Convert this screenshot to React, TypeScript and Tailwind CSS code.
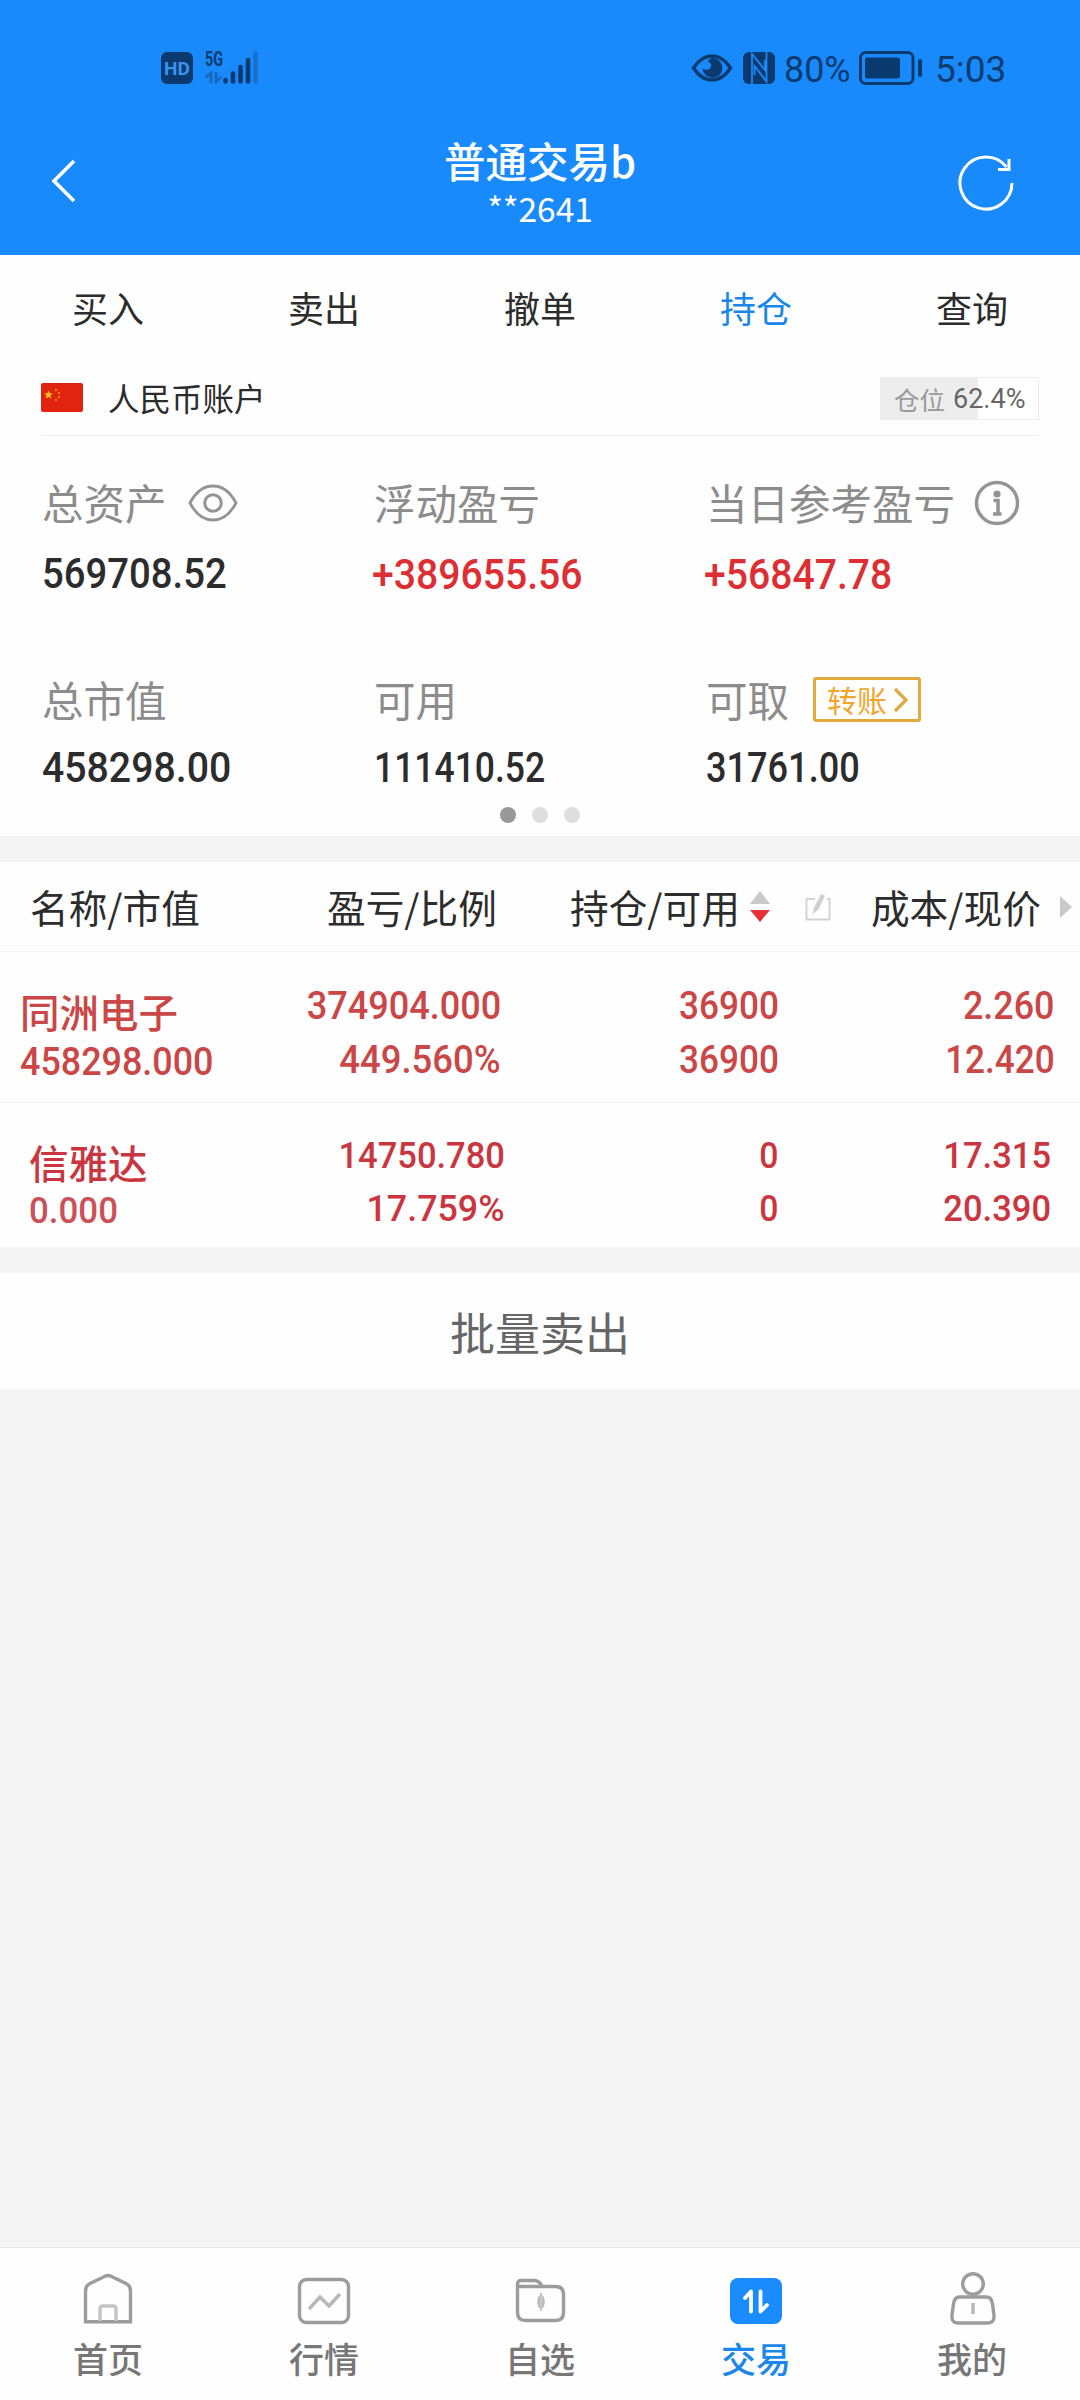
import React from "react";

const CJK = "font-['Noto_Sans_CJK_SC',sans-serif]";
const NUM = "inline-block whitespace-nowrap font-['Roboto',sans-serif] font-medium";

function StatusBar() {
  return (
    <div className="flex h-[136px] items-center pl-[161px] pr-[76px] text-[#0a3a6e]">
      <div className="flex h-8 w-8 items-center justify-center rounded-[6px] bg-[#0a3a6e] font-['Roboto',sans-serif] text-[19px] font-bold leading-none text-[#3b93ee]">
        HD
      </div>
      <div className="ml-[12px] flex h-[36px] w-[18px] flex-col justify-between pb-[2px]">
        <span className="inline-block origin-left scale-x-[0.72] whitespace-nowrap font-['Roboto',sans-serif] text-[20px] font-bold leading-[18px]">5G</span>
        <svg width="18" height="13" viewBox="0 0 18 13">
          <path d="M1 6.500L6 2v10M11 1v10l5-5" fill="none" stroke="#1668b8" strokeWidth="2.800" />
        </svg>
      </div>
      <svg width="36" height="36" viewBox="223 50 36 36">
        <g stroke="#0a3a6e" strokeWidth="4.600" strokeLinecap="round">
          <path d="M225.500 80v1.500M233 73.500v8M240.500 67v14.500M248 60v21.500" />
          <path d="M255.700 53.500v28" stroke="#1871cb" />
        </g>
      </svg>
      <div className="ml-auto flex items-center">
        <svg width="42" height="30" viewBox="0 0 42 30">
          <path d="M2.500 15C8 6.500 14 3 21 3s13 3.500 18.500 12C34 23.500 28 27 21 27S8 23.500 2.500 15z" fill="none" stroke="#0a3a6e" strokeWidth="3.400" />
          <path d="M22 5a10 10 0 1 1-10.500 10.500c3.500 2.500 7.500 1.300 8.500-2 .7-2.800-.5-4-3-4.500.5-2.500 2.500-4 5-4z" fill="#0a3a6e" />
        </svg>
        <svg className="ml-[10px]" width="32" height="32" viewBox="0 0 32 32">
          <rect width="32" height="32" rx="6" fill="#0a3a6e" />
          <path d="M9 32V2l13 16V8M23.500 0v29.500L11.500 14v9" fill="none" stroke="#188afc" strokeWidth="1.800" />
        </svg>
        <span className="ml-[9px] mt-[4px] w-[68px] whitespace-nowrap font-['Roboto',sans-serif] text-[37px] leading-[44px]">
          <span className="inline-block origin-left scale-x-[0.97]">80%</span>
        </span>
        <svg className="ml-[7px]" width="64" height="34" viewBox="0 0 64 34">
          <rect x="1.500" y="1.500" width="52.500" height="31" rx="5.500" fill="none" stroke="#0a3a6e" strokeWidth="3" />
          <rect x="6" y="6.500" width="35" height="21" rx="2" fill="#0a3a6e" />
          <rect x="59" y="8" width="4" height="18" rx="2" fill="#0a3a6e" />
        </svg>
        <span className="ml-[12px] mt-[4px] w-[69px] whitespace-nowrap font-['Roboto',sans-serif] text-[37px] leading-[44px]">5:03</span>
      </div>
    </div>
  );
}

function TitleBar() {
  return (
    <div className="grid h-[119px] grid-cols-[1fr_auto_1fr] items-start pl-[50px] pr-[64px] text-white">
      <svg className="mt-[23px]" width="28" height="44" viewBox="0 0 28 44">
        <path d="M24 2L4 22l20 20" fill="none" stroke="currentColor" strokeWidth="3.600" />
      </svg>
      <div className="ml-[14px] flex flex-col items-center">
        <div className="h-[51px] text-[41.500px] font-medium leading-[49px]">普通交易b</div>
        <div className="text-[33.500px] leading-[42px]">**2641</div>
      </div>
      <svg className="ml-auto mt-[18px]" width="60" height="60" viewBox="956 154 60 60">
        <path d="M1012 183a26 26 0 1 1-5.500-16" fill="none" stroke="currentColor" strokeWidth="3" />
        <path d="M1009 159v10.500h-11" fill="none" stroke="currentColor" strokeWidth="3" />
      </svg>
    </div>
  );
}

const tabs = ["买入", "卖出", "撤单", "持仓", "查询"];

function Tabs() {
  return (
    <div className="grid h-[108px] grid-cols-5 text-center text-[36px] leading-[104px]">
      {tabs.map((t) => (
        <div key={t} className={t === "持仓" ? "text-[#1787e8]" : "text-[#2c2c2c]"}>{t}</div>
      ))}
    </div>
  );
}

function AccountRow() {
  return (
    <div className="mx-[41px] flex h-[73px] items-start border-b border-[#f3eeee]">
      <svg className="mt-[20px]" width="42" height="29" viewBox="0 0 42 29">
        <rect width="42" height="29" rx="2" fill="#e0240f" />
        <path d="M7.500 7.500l1.200 2.800 3 .2-2.300 2 .8 3-2.700-1.600-2.700 1.600.8-3-2.300-2 3-.2z" fill="#fbc21a" />
        <g fill="#f0821c">
          <circle cx="15" cy="7" r="1.200" />
          <circle cx="18" cy="10" r="1.200" />
          <circle cx="18" cy="14" r="1.200" />
          <circle cx="15" cy="17" r="1.200" />
        </g>
      </svg>
      <div className="ml-[25px] text-[31.500px] leading-[68px] text-[#2c2c2c]">人民币账户</div>
      <div className="ml-auto mt-[14px] flex h-[43px] w-[159px] items-center border border-[#ececec] bg-[linear-gradient(90deg,#ededed_62%,#fff_62%)] pl-[13px] text-[25.500px] leading-none text-[#999]">
        仓位
        <span className="ml-[8px] mt-[2px] w-[72px] whitespace-nowrap font-['Roboto',sans-serif] text-[27px] text-[#666]">
          <span className="inline-block origin-left">62.4%</span>
        </span>
      </div>
    </div>
  );
}

type Stat = { label: string; value: string; tone: string; fit: string; extra?: React.ReactNode };

const EyeOutline = (
  <svg className="-mt-[3px] ml-[21px]" width="50" height="38" viewBox="0 0 50 38">
    <path d="M2 19C8 7.500 16 2 25 2s17 5.500 23 17C42 30.500 34 36 25 36S8 30.500 2 19z" fill="none" stroke="#949494" strokeWidth="2.800" />
    <circle cx="25" cy="19" r="8.300" fill="none" stroke="#949494" strokeWidth="3" />
  </svg>
);

const Info = (
  <svg className="-mt-[3px] ml-[19px]" width="46" height="46" viewBox="0 0 46 46">
    <circle cx="23" cy="23" r="20.500" fill="none" stroke="#949494" strokeWidth="3.400" />
    <circle cx="23" cy="14" r="3.600" fill="#949494" />
    <path d="M19.500 20.500h4.500v13M19 34h8.500" fill="none" stroke="#949494" strokeWidth="3.600" />
  </svg>
);

const Transfer = (
  <div className="-mt-[3px] ml-[24px] flex h-[45px] w-[108px] items-center rounded-[3px] border-[3px] border-[#e2a93c] pl-[11px] text-[30px] leading-none text-[#f0a62c]">
    <span className="-mt-[2px]">转账</span>
    <svg className="ml-[6px]" width="16" height="28" viewBox="0 0 16 28">
      <path d="M2 3l11 11L2 25" fill="none" stroke="#e2a93c" strokeWidth="3.200" />
    </svg>
  </div>
);

const stats: Stat[] = [
  { label: "总资产", value: "569708.52", tone: "text-[#2c2c2c]", fit: "-mt-px scale-x-[0.89]", extra: EyeOutline },
  { label: "浮动盈亏", value: "+389655.56", tone: "text-[#dd2f33]", fit: "-ml-[2px] scale-x-[0.91]" },
  { label: "当日参考盈亏", value: "+56847.78", tone: "text-[#dd2f33]", fit: "-ml-[2px] scale-x-[0.91]", extra: Info },
  { label: "总市值", value: "458298.00", tone: "text-[#2c2c2c]", fit: "scale-x-[0.912]" },
  { label: "可用", value: "111410.52", tone: "text-[#2c2c2c]", fit: "scale-x-[0.825]" },
  { label: "可取", value: "31761.00", tone: "text-[#2c2c2c]", fit: "scale-x-[0.84]", extra: Transfer },
];

function StatRow({ items, gap }: { items: Stat[]; gap: string }) {
  return (
    <div className="grid h-[124px] grid-cols-[332px_332px_1fr]">
      {items.map((s) => (
        <div key={s.label}>
          <div className="flex h-[56px] items-center whitespace-nowrap text-[41.500px] leading-[52px] text-[#8c8c8c]">
            <span className="-mt-[5px]">{s.label}</span>
            {s.extra}
          </div>
          <div className={gap}>
            <div className={NUM + " origin-left text-[43px] leading-[52px] " + s.tone + " " + s.fit}>{s.value}</div>
          </div>
        </div>
      ))}
    </div>
  );
}

function Summary() {
  return (
    <div className="h-[400px] pt-[40px]">
      <div className="flex flex-col gap-[73px] pl-[42px]">
        <StatRow items={stats.slice(0, 3)} gap="pt-[16px]" />
        <StatRow items={stats.slice(3)} gap="pt-[12px]" />
      </div>
      <div className="mt-[10px] flex justify-center gap-4">
        <i className="h-4 w-4 rounded-full bg-[#999]" />
        <i className="h-4 w-4 rounded-full bg-[#dedede]" />
        <i className="h-4 w-4 rounded-full bg-[#dedede]" />
      </div>
    </div>
  );
}

function TableHead() {
  return (
    <div className="flex h-[90px] items-center border-b border-[#f3f3f3] pl-[30px] text-[38.700px] leading-[60px] text-[#2c2c2c]">
      <div className="-mt-[2px] w-[297px]">名称/市值</div>
      <div className="-mt-[2px] w-[243px]">盈亏/比例</div>
      <div className="-mt-[2px]">持仓/可用</div>
      <svg className="ml-[10px]" width="20" height="32" viewBox="0 0 20 32">
        <path d="M10 0l10 13H0z" fill="#c9c9c9" />
        <path d="M0 19h20L10 31z" fill="#e62e38" />
      </svg>
      <svg className="ml-[35px]" width="26" height="28" viewBox="0 0 26 28">
        <path d="M10 6H1.500v20.500h23V6H22" fill="none" stroke="#d2d2d2" strokeWidth="1.800" />
        <path d="M7.500 21.500l1.500-7L16 1l4 1.800-6.500 13.500z" fill="#cfcfcf" />
      </svg>
      <div className="-mt-[2px] ml-[40px]">成本/现价</div>
      <svg className="ml-auto mr-[8px]" width="12" height="22" viewBox="0 0 12 22">
        <path d="M0 0l12 11L0 22z" fill="#c9c9c9" />
      </svg>
    </div>
  );
}

function Pair({ a, b, cls, fa, fb }: { a: string; b: string; cls: string; fa: string; fb: string }) {
  return (
    <div className={"flex flex-col items-end " + cls}>
      <span className={NUM + " origin-right " + fa}>{a}</span>
      <span className={NUM + " origin-right " + fb}>{b}</span>
    </div>
  );
}

function Holdings() {
  return (
    <div className="h-[295px]">
      <div className="flex h-[151px] items-start border-b border-[#f0f0f0] pl-[20px] text-[39px] leading-[54px] text-[#cb4646]">
        <div className="w-[201px] pt-[31px]">
          <div className="h-[48px] whitespace-nowrap text-[39.500px] font-medium leading-[56px]">同洲电子</div>
          <span className={NUM + " origin-left scale-x-[0.92]"}>458298.000</span>
        </div>
        <Pair cls="w-[280px] pt-[27px]" a="374904.000" b="449.560%" fa="scale-x-[0.925]" fb="scale-x-[0.935]" />
        <Pair cls="w-[278px] pt-[27px]" a="36900" b="36900" fa="scale-x-[0.9]" fb="scale-x-[0.9]" />
        <Pair cls="w-[275px] pt-[27px]" a="2.260" b="12.420" fa="scale-x-[0.92]" fb="scale-x-[0.9] -mr-px" />
      </div>
      <div className="flex items-start pl-[29px] text-[37.500px] leading-[53px] text-[#c9363f]">
        <div className="w-[201px] pt-[32px]">
          <div className="h-[45px] whitespace-nowrap text-[39.500px] font-medium leading-[54px]">信雅达</div>
          <span className={NUM + " origin-left scale-x-[0.93] text-[#cc5058]"}>0.000</span>
        </div>
        <Pair cls="w-[275px] pt-[26px]" a="14750.780" b="17.759%" fa="scale-x-[0.92]" fb="scale-x-[0.955]" />
        <Pair cls="w-[273px] pt-[26px]" a="0" b="0" fa="scale-x-[0.9]" fb="scale-x-[0.9]" />
        <Pair cls="w-[273px] pt-[26px]" a="17.315" b="20.390" fa="scale-x-[0.92]" fb="scale-x-[0.92]" />
      </div>
    </div>
  );
}

const navIcons = {
  首页: (
    <>
      <path d="M4.500 49.700V19q0-5 4-7.200L24 4.300q3-1.500 6 0L45.500 11.800q4 2.200 4 7.200v30.700z" />
      <path d="M19 49V37q0-3 3-3h10q3 0 3 3v12" stroke="#c4c4c4" />
    </>
  ),
  行情: (
    <>
      <rect x="2.500" y="7.500" width="49" height="43" rx="7" />
      <path d="M12 37l11-12 9 9 11-12" stroke="#b8b8b8" />
    </>
  ),
  自选: (
    <>
      <path d="M4.500 14.500v26q0 8 8 8h30q8 0 8-8V22.500q0-8-8-8H29q-2.500-6-8-6H8Q4.500 8.500 4.500 12v2.500h25" />
      <ellipse cx="28" cy="29.700" rx="3.800" ry="7" fill="#bcbcbc" stroke="none" />
      <path d="M28 20.500v18.500" stroke="#c8c8c8" strokeWidth="2" />
    </>
  ),
  交易: (
    <>
      <rect x="1" y="6" width="52" height="46" rx="8" fill="#1a8cff" stroke="none" />
      <path d="M16 26l6-6.500v20M31.500 19.500v20l6.500-6.500" stroke="#fff" strokeWidth="3.800" strokeLinecap="round" strokeLinejoin="round" />
    </>
  ),
  我的: (
    <>
      <circle cx="28" cy="12" r="10.300" />
      <path d="M14.500 25h27q5 0 6 7l1.500 11q.8 8-6.500 8h-29Q6 51 7 43l1.500-11q1-7 6-7z" />
      <path d="M28 31v11" stroke="#b5b5b5" />
    </>
  ),
};

function BottomNav() {
  return (
    <div className="mt-auto grid h-[153px] grid-cols-5 border-t border-[#e8e8e8] bg-[#fefefe]">
      {Object.entries(navIcons).map(([name, icon]) => (
        <div key={name} className="flex flex-col items-center pt-[24px]">
          <svg width="54" height="54" viewBox="0 0 54 54" fill="none" stroke="#9c9c9c" strokeWidth="3.400">
            {icon}
          </svg>
          <div className={"mt-[6px] text-[35px] font-medium leading-[52px] " + (name === "交易" ? "text-[#1a88ea]" : "text-[#777]")}>{name}</div>
        </div>
      ))}
    </div>
  );
}

export default function App() {
  return (
    <div className={"flex h-[2400px] w-[1080px] flex-col overflow-hidden bg-[#f4f4f4] " + CJK}>
      <header className="h-[255px] bg-[#188afc]">
        <StatusBar />
        <TitleBar />
      </header>
      <section className="bg-[#fefefe]">
        <Tabs />
        <AccountRow />
        <Summary />
      </section>
      <section className="mt-[26px] bg-[#fefefe]">
        <TableHead />
        <Holdings />
      </section>
      <button className="mt-[26px] h-[116px] bg-[#fefefe] pt-[1px] text-[45px] leading-[60px] text-[#666]">批量卖出</button>
      <BottomNav />
    </div>
  );
}
